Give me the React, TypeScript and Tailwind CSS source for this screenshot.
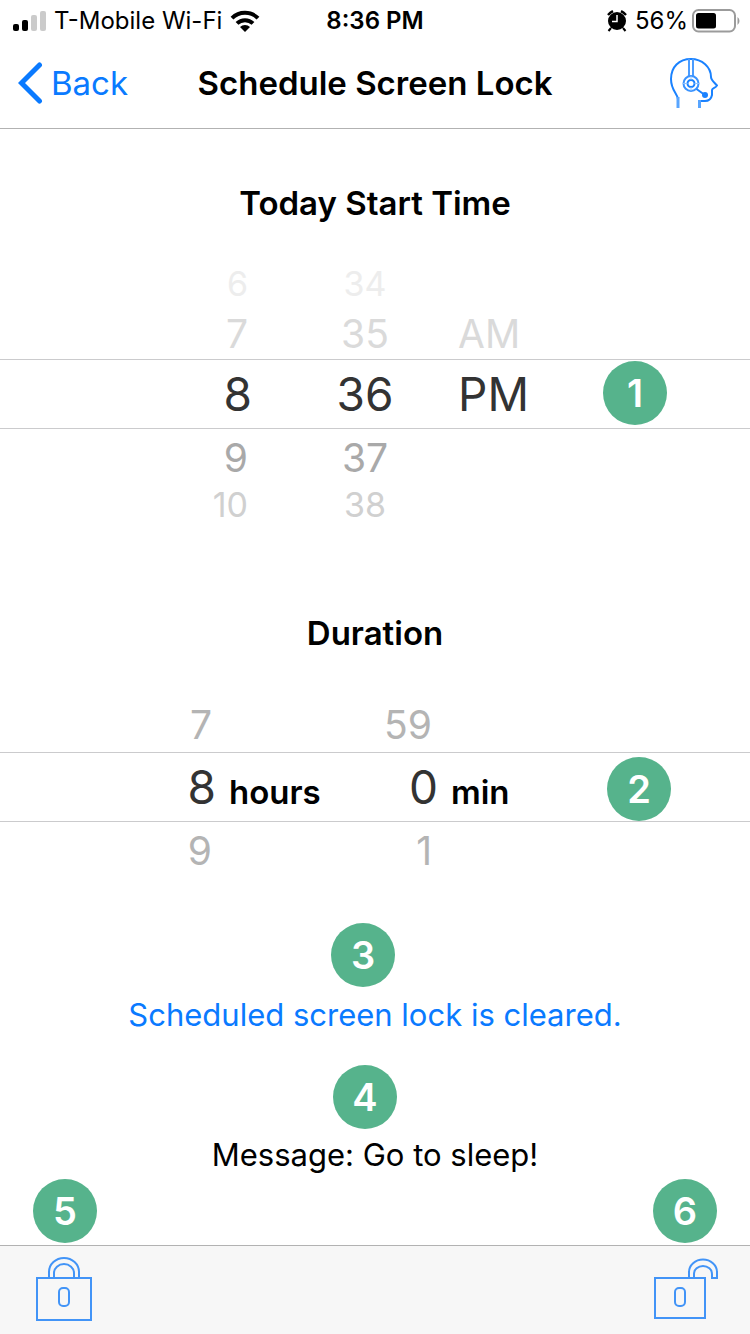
import { useState, type ReactNode } from "react";

const wrap = (n: number, size: number) => ((n % size) + size) % size;
const hour12 = (n: number) => wrap(n - 1, 12) + 1;

// one line of the time wheel per distance from the selected value
const startRows = [
  { offset: -2, row: "h-12 text-[34px] text-[#ededed]" },
  { offset: -1, row: "h-[51px] text-[39px] text-[#dadada]" },
  { offset: 0, row: "h-[70px] border-y border-[#cbcbcd] text-[46px] text-[#333]" },
  { offset: 1, row: "h-14 text-[39px] text-[#a9a9a9]" },
  { offset: 2, row: "h-10 text-[34px] text-[#d0d0d0]" },
];

const durationRows = [
  { offset: -1, row: "h-14 text-[39px] text-[#b4b4b4]" },
  { offset: 0, row: "h-[70px] border-y border-[#cbcbcd] text-[46px] text-[#333]" },
  { offset: 1, row: "h-14 text-[39px] text-[#b4b4b4]" },
];

function Badge({ children, className = "" }: { children: ReactNode; className?: string }) {
  return (
    <span className={`flex size-16 items-center justify-center rounded-full bg-[#56b38c] text-[38px] leading-none font-semibold text-white ${className}`}>
      {children}
    </span>
  );
}

function StatusBar() {
  return (
    <div className="grid h-[42px] grid-cols-[1fr_auto_1fr] items-center px-3 text-[24px] leading-none">
      <div className="flex items-center gap-2">
        <svg width="34" height="22" viewBox="0 0 34 22" aria-hidden="true">
          <rect x="1" y="14" width="6" height="7" rx="2" />
          <rect x="10" y="10" width="6" height="11" rx="2" />
          <rect x="19" y="5" width="6" height="16" rx="2" fill="#cbcbcb" />
          <rect x="28" y="1" width="6" height="20" rx="2" fill="#cbcbcb" />
        </svg>
        <span className="whitespace-nowrap">T-Mobile Wi-Fi</span>
        <svg width="30" height="22" viewBox="0 0 30 22" aria-hidden="true">
          <g fill="none" stroke="#000" strokeWidth="4">
            <path d="M2 8.2a18.5 18.5 0 0 1 26 0" />
            <path d="M7 13.4a11.5 11.5 0 0 1 16 0" />
          </g>
          <path d="M15 22l-5-5a7 7 0 0 1 10 0z" />
        </svg>
      </div>
      <span className="font-semibold">8:36 PM</span>
      <div className="-mr-0.5 flex items-center justify-end">
        <svg width="20" height="22" viewBox="0 0 20 22" className="mr-2" aria-hidden="true">
          <circle cx="10" cy="11" r="9" />
          <path d="M1 5A20 20 0 0 1 6 1.200M19 5A20 20 0 0 0 14 1.200" fill="none" stroke="#000" strokeWidth="2.500" />
          <path d="M4 18l-2.500 3M16 18l2.500 3" stroke="#000" strokeWidth="2" />
          <path d="M10 5v6.500H5" fill="none" stroke="#fff" strokeWidth="1.500" />
        </svg>
        <span>56%</span>
        <svg width="48" height="24" viewBox="0 0 48 24" className="ml-1" aria-hidden="true">
          <rect x="1" y="1" width="42" height="21.500" rx="5.500" fill="none" stroke="#9b9b9b" strokeWidth="2" />
          <rect x="4" y="4" width="20" height="15.500" rx="2.500" />
          <path d="M45.500 8v8a5 5 0 0 0 0-8z" fill="#9b9b9b" />
        </svg>
      </div>
    </div>
  );
}

function SupportIcon() {
  return (
    <svg width="48" height="51" viewBox="0 0 48 51" fill="none" stroke="#1a82ff" strokeWidth="2" aria-hidden="true">
      <path d="M8 41C7 35 1 32 1 21C1 9 9 1 21 1C32 1 41 9 41 19C41 22 44 24 47 27.500C46 30 42 30 42 32V37C41 42 38 43 35 43H29" />
      <path d="M8 39V50M29.500 42V50" stroke="#58a5ff" strokeWidth="3" />
      <path d="M19 1v17M23 1v17" stroke="#4a9cff" />
      <circle cx="21" cy="25.500" r="7.500" stroke="#3a93ff" />
      <circle cx="21" cy="25.500" r="3.500" />
      <path d="M21 18v4M21 29v4M13 25.500h4.500M24.500 25.500h4.500" stroke="#8cc2ff" strokeWidth="1" />
      <path d="M26.500 31l7 5" />
      <circle cx="35" cy="37" r="3" fill="#1a82ff" stroke="none" />
    </svg>
  );
}

function LockIcon() {
  return (
    <svg width="56" height="64" viewBox="0 0 56 64" fill="none" stroke="#4294f7" strokeWidth="2" aria-hidden="true">
      <rect x="1" y="21" width="54" height="42" />
      <path d="M13 21V15a15 14 0 0 1 30 0V21M18 21V16a10 9 0 0 1 20 0V21" />
      <rect x="23" y="31" width="10" height="18" rx="4" />
    </svg>
  );
}

function UnlockIcon() {
  return (
    <svg width="64" height="62" viewBox="0 0 64 62" fill="none" stroke="#4294f7" strokeWidth="2" aria-hidden="true">
      <rect x="1" y="21" width="50" height="40" />
      <path d="M35 21V15a14 12.500 0 0 1 28 0V21H58V17a9 8 0 0 0-18 0V21" />
      <rect x="21" y="31" width="10" height="18" rx="4" />
    </svg>
  );
}

export default function App() {
  const [hour, setHour] = useState(8);
  const [minute, setMinute] = useState(36);
  const [period, setPeriod] = useState(1);
  const [hours, setHours] = useState(8);
  const [mins, setMins] = useState(0);
  const periods = ["AM", "PM"];

  return (
    <div className="flex min-h-screen flex-col bg-white font-['Inter','Liberation_Sans',sans-serif] text-black">
      <StatusBar />
      <header className="flex h-[87px] items-center border-b border-[#b2b2b2] pr-8 pb-1 pl-[18px]">
        <div className="flex flex-1">
          <button type="button" className="flex items-center gap-2 text-[33px] leading-none text-[#0a7aff]">
            <svg width="25" height="42" viewBox="0 0 25 42" fill="none" stroke="currentColor" strokeWidth="5" strokeLinecap="round" strokeLinejoin="miter" aria-hidden="true">
              <path d="M21.500 3L3.500 21L21.500 39" />
            </svg>
            Back
          </button>
        </div>
        <h1 className="ml-3.5 text-[33px] leading-none font-semibold">Schedule Screen Lock</h1>
        <div className="flex flex-1 justify-end">
          <button type="button" aria-label="Support"><SupportIcon /></button>
        </div>
      </header>

      <main className="flex flex-1 flex-col text-center">
        <h2 className="mt-[54px] mb-[37px] text-[33px] leading-10 font-semibold">Today Start Time</h2>
        <div role="group" aria-label="Start time">
          {startRows.map(({ offset, row }) => (
            <div key={offset} className={`relative grid grid-cols-[82px_206px_122px] items-center justify-center leading-none ${row}`}>
              <button type="button" className={offset ? "pr-1 text-right" : "text-right"} onClick={() => setHour(hour12(hour + offset))}>
                {hour12(hour + offset)}
              </button>
              <button type="button" className="pl-5" onClick={() => setMinute(wrap(minute + offset, 60))}>
                {String(wrap(minute + offset, 60)).padStart(2, "0")}
              </button>
              {periods[period + offset] && (
                <button type="button" className="text-left" onClick={() => setPeriod(period + offset)}>{periods[period + offset]}</button>
              )}
              {offset === 0 && <Badge className="absolute top-px right-[83px]">1</Badge>}
            </div>
          ))}
        </div>

        <h2 className="mt-[88px] mb-[43px] text-[33px] leading-10 font-semibold">Duration</h2>
        <div role="group" aria-label="Duration">
          {durationRows.map(({ offset, row }) => (
            <div key={offset} className={`relative grid grid-cols-[56px_140px_56px_139px] content-center items-baseline justify-center gap-x-[13px] leading-none ${row}`}>
              <button type="button" className={offset ? "pr-1 text-right" : "text-right"} onClick={() => setHours(wrap(hours + offset, 24))}>
                {wrap(hours + offset, 24)}
              </button>
              <span className="text-left text-[33px] font-semibold text-black">{offset === 0 && "hours"}</span>
              <button type="button" className={offset ? "pr-1.5 text-right" : "text-right"} onClick={() => setMins(wrap(mins + offset, 60))}>
                {wrap(mins + offset, 60)}
              </button>
              <span className="text-left text-[33px] font-semibold text-black">{offset === 0 && "min"}</span>
              {offset === 0 && <Badge className="absolute top-1 right-[79px]">2</Badge>}
            </div>
          ))}
        </div>

        <Badge className="mt-[45px] mr-6 self-center">3</Badge>
        <p className="mt-2 text-[31px] leading-10 text-[#0a7aff]">Scheduled screen lock is cleared.</p>
        <Badge className="mt-[30px] mr-5 self-center">4</Badge>
        <p className="mt-1.5 text-[31px] leading-10">Message: Go to sleep!</p>
        <div className="mt-auto flex justify-between px-[33px] pt-1 pb-0.5">
          <Badge>5</Badge>
          <Badge>6</Badge>
        </div>
      </main>

      <footer className="flex h-[89px] items-start justify-between border-t border-[#b2b2b2] bg-[#f7f7f7] pt-[11px] pr-8 pl-9">
        <button type="button" aria-label="Lock screen"><LockIcon /></button>
        <button type="button" aria-label="Unlock screen"><UnlockIcon /></button>
      </footer>
    </div>
  );
}
